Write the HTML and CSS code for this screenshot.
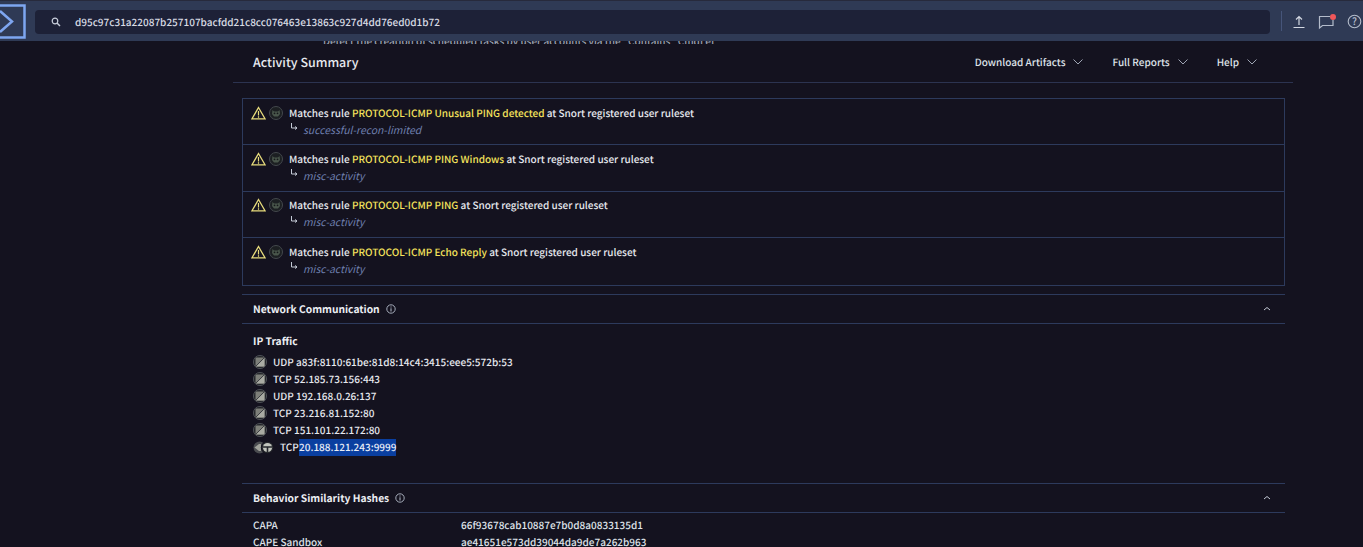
FILE: index.html
```html
<!DOCTYPE html>
<html lang="en">
<head>
<meta charset="utf-8">
<title>Activity Summary</title>
<link rel="stylesheet" href="styles.css">
</head>
<body>
<header class="topbar">
  <div class="logo"><svg width="26" height="35" viewBox="0 0 26 35"><path d="M0 1.500H24.500V33.500H0" fill="none" stroke="#7ea6f0" stroke-width="2.500"/><path d="M0 7L12 17.500L0 28" fill="none" stroke="#7ea6f0" stroke-width="2.500"/></svg></div>
  <div class="search">
    <svg class="search-icon" width="10" height="10" viewBox="0 0 10 10"><circle cx="4" cy="4" r="2.800" fill="none" stroke="#c9cfdc" stroke-width="1.200"/><path d="M6 6L9 9" stroke="#c9cfdc" stroke-width="1.400"/></svg>
    <span class="search-text">d95c97c31a22087b257107bacfdd21c8cc076463e13863c927d4dd76ed0d1b72</span>
  </div>
  <div class="top-sep"></div>
  <div class="top-icons">
    <svg width="14" height="16" viewBox="0 0 14 16"><path d="M7 11V3M4 5.500L7 2.500L10 5.500M1.500 13.500H12.500" fill="none" stroke="#d3d8e2" stroke-width="1.200"/></svg>
    <span class="chat"><svg width="17" height="16" viewBox="0 0 17 16"><path d="M12 2.500H1.500V14L4.500 11.500H15V6" fill="none" stroke="#b4bccb" stroke-width="1.200"/></svg><i class="dot"></i></span>
    <svg width="15" height="15" viewBox="0 0 15 15"><circle cx="7.500" cy="7.500" r="6.300" fill="none" stroke="#b4bccb" stroke-width="1.100"/><text x="7.500" y="10.800" class="qmark">?</text></svg>
  </div>
</header>

<main class="report">
  <nav class="summary-head">
    <div class="clipped">Detect the creation of scheduled tasks by user accounts via the "Contains" CmdLet</div>
    <h1>Activity Summary</h1>
    <div class="menus">
      <span class="menu">Download Artifacts<svg class="chev" width="10" height="6" viewBox="0 0 10 6"><path d="M.5 .5L5 5L9.500 .5"/></svg></span>
      <span class="menu">Full Reports<svg class="chev" width="10" height="6" viewBox="0 0 10 6"><path d="M.5 .5L5 5L9.500 .5"/></svg></span>
      <span class="menu">Help<svg class="chev" width="10" height="6" viewBox="0 0 10 6"><path d="M.5 .5L5 5L9.500 .5"/></svg></span>
    </div>
  </nav>

  <div class="alerts">
    <div class="alert">
      <div class="alert-line">
        <svg class="warn" width="15" height="14" viewBox="0 0 15 14"><path d="M7.500 1.500L14 12.800H1Z" fill="none" stroke="#e8dc7c" stroke-width="1.300"/><path d="M7.500 5V9.500M7.500 10.300V11.800" stroke="#e8dc7c" stroke-width="1.200"/></svg>
        <svg class="bug" width="14" height="14" viewBox="0 0 14 14"><circle cx="7" cy="7" r="6.500" fill="#1c1f22" stroke="#44484d"/><path d="M3.500 4L5 5.500H9L10.500 4L11 8L9 10.500H5L3 8Z" fill="#49564b"/><circle cx="5.500" cy="7.300" r=".9" fill="#15171a"/><circle cx="8.500" cy="7.300" r=".9" fill="#15171a"/></svg>
        <span>Matches rule <b class="rule">PROTOCOL-ICMP Unusual PING detected</b> at Snort registered user ruleset</span>
      </div>
      <div class="alert-sub"><svg class="arrow" width="8" height="8" viewBox="0 0 8 8"><path d="M1.500 0V5H7M5 3.500L7 5L5 6.500" fill="none" stroke="#c4cad6"/></svg><em>successful-recon-limited</em></div>
    </div>
    <div class="alert">
      <div class="alert-line">
        <svg class="warn" width="15" height="14" viewBox="0 0 15 14"><path d="M7.500 1.500L14 12.800H1Z" fill="none" stroke="#e8dc7c" stroke-width="1.300"/><path d="M7.500 5V9.500M7.500 10.300V11.800" stroke="#e8dc7c" stroke-width="1.200"/></svg>
        <svg class="bug" width="14" height="14" viewBox="0 0 14 14"><circle cx="7" cy="7" r="6.500" fill="#1c1f22" stroke="#44484d"/><path d="M3.500 4L5 5.500H9L10.500 4L11 8L9 10.500H5L3 8Z" fill="#49564b"/><circle cx="5.500" cy="7.300" r=".9" fill="#15171a"/><circle cx="8.500" cy="7.300" r=".9" fill="#15171a"/></svg>
        <span>Matches rule <b class="rule">PROTOCOL-ICMP PING Windows</b> at Snort registered user ruleset</span>
      </div>
      <div class="alert-sub"><svg class="arrow" width="8" height="8" viewBox="0 0 8 8"><path d="M1.500 0V5H7M5 3.500L7 5L5 6.500" fill="none" stroke="#c4cad6"/></svg><em>misc-activity</em></div>
    </div>
    <div class="alert">
      <div class="alert-line">
        <svg class="warn" width="15" height="14" viewBox="0 0 15 14"><path d="M7.500 1.500L14 12.800H1Z" fill="none" stroke="#e8dc7c" stroke-width="1.300"/><path d="M7.500 5V9.500M7.500 10.300V11.800" stroke="#e8dc7c" stroke-width="1.200"/></svg>
        <svg class="bug" width="14" height="14" viewBox="0 0 14 14"><circle cx="7" cy="7" r="6.500" fill="#1c1f22" stroke="#44484d"/><path d="M3.500 4L5 5.500H9L10.500 4L11 8L9 10.500H5L3 8Z" fill="#49564b"/><circle cx="5.500" cy="7.300" r=".9" fill="#15171a"/><circle cx="8.500" cy="7.300" r=".9" fill="#15171a"/></svg>
        <span>Matches rule <b class="rule">PROTOCOL-ICMP PING</b> at Snort registered user ruleset</span>
      </div>
      <div class="alert-sub"><svg class="arrow" width="8" height="8" viewBox="0 0 8 8"><path d="M1.500 0V5H7M5 3.500L7 5L5 6.500" fill="none" stroke="#c4cad6"/></svg><em>misc-activity</em></div>
    </div>
    <div class="alert">
      <div class="alert-line">
        <svg class="warn" width="15" height="14" viewBox="0 0 15 14"><path d="M7.500 1.500L14 12.800H1Z" fill="none" stroke="#e8dc7c" stroke-width="1.300"/><path d="M7.500 5V9.500M7.500 10.300V11.800" stroke="#e8dc7c" stroke-width="1.200"/></svg>
        <svg class="bug" width="14" height="14" viewBox="0 0 14 14"><circle cx="7" cy="7" r="6.500" fill="#1c1f22" stroke="#44484d"/><path d="M3.500 4L5 5.500H9L10.500 4L11 8L9 10.500H5L3 8Z" fill="#49564b"/><circle cx="5.500" cy="7.300" r=".9" fill="#15171a"/><circle cx="8.500" cy="7.300" r=".9" fill="#15171a"/></svg>
        <span>Matches rule <b class="rule">PROTOCOL-ICMP Echo Reply</b> at Snort registered user ruleset</span>
      </div>
      <div class="alert-sub"><svg class="arrow" width="8" height="8" viewBox="0 0 8 8"><path d="M1.500 0V5H7M5 3.500L7 5L5 6.500" fill="none" stroke="#c4cad6"/></svg><em>misc-activity</em></div>
    </div>
  </div>

  <section class="panel network">
    <div class="panel-head">
      <h2>Network Communication</h2>
      <svg class="info" width="10" height="10" viewBox="0 0 10 10"><circle cx="5" cy="5" r="4.200" fill="none" stroke="#b4bccb" stroke-width=".9"/><path d="M5 4.300V7.500M5 2.500V3.500" stroke="#b4bccb"/></svg>
      <svg class="collapse" width="8" height="5" viewBox="0 0 8 5"><path d="M1 4L4 1.500L7 4" fill="none" stroke="#c4cad6"/></svg>
    </div>
    <div class="panel-body">
      <h3>IP Traffic</h3>
      <ul class="traffic">
        <li><svg class="flag" width="14" height="14" viewBox="0 0 14 14"><circle cx="7" cy="7" r="6.600" fill="#24262b" stroke="#4a4d53"/><rect x="2.500" y="2.500" width="9" height="9" rx="1" fill="#7d7f79"/><path d="M11.500 3V11.500H3Z" fill="#a9aba3"/><path d="M2.500 11.500L11.500 2.500" stroke="#3c3e42"/></svg>UDP a83f:8110:61be:81d8:14c4:3415:eee5:572b:53</li>
        <li><svg class="flag" width="14" height="14" viewBox="0 0 14 14"><circle cx="7" cy="7" r="6.600" fill="#24262b" stroke="#4a4d53"/><rect x="2.500" y="2.500" width="9" height="9" rx="1" fill="#7d7f79"/><path d="M11.500 3V11.500H3Z" fill="#a9aba3"/><path d="M2.500 11.500L11.500 2.500" stroke="#3c3e42"/></svg>TCP 52.185.73.156:443</li>
        <li><svg class="flag" width="14" height="14" viewBox="0 0 14 14"><circle cx="7" cy="7" r="6.600" fill="#24262b" stroke="#4a4d53"/><rect x="2.500" y="2.500" width="9" height="9" rx="1" fill="#7d7f79"/><path d="M11.500 3V11.500H3Z" fill="#a9aba3"/><path d="M2.500 11.500L11.500 2.500" stroke="#3c3e42"/></svg>UDP 192.168.0.26:137</li>
        <li><svg class="flag" width="14" height="14" viewBox="0 0 14 14"><circle cx="7" cy="7" r="6.600" fill="#24262b" stroke="#4a4d53"/><rect x="2.500" y="2.500" width="9" height="9" rx="1" fill="#7d7f79"/><path d="M11.500 3V11.500H3Z" fill="#a9aba3"/><path d="M2.500 11.500L11.500 2.500" stroke="#3c3e42"/></svg>TCP 23.216.81.152:80</li>
        <li><svg class="flag" width="14" height="14" viewBox="0 0 14 14"><circle cx="7" cy="7" r="6.600" fill="#24262b" stroke="#4a4d53"/><rect x="2.500" y="2.500" width="9" height="9" rx="1" fill="#7d7f79"/><path d="M11.500 3V11.500H3Z" fill="#a9aba3"/><path d="M2.500 11.500L11.500 2.500" stroke="#3c3e42"/></svg>TCP 151.101.22.172:80</li>
        <li class="double"><svg class="flag2" width="21" height="13" viewBox="0 0 21 13"><circle cx="6.500" cy="6.500" r="6" fill="#4a4c50"/><path d="M1.500 6.500L6 3H8V10H6Z" fill="#a0a29b"/><circle cx="14.500" cy="6.500" r="6.200" fill="#26282d" stroke="#14121f"/><circle cx="14.500" cy="6.500" r="4.600" fill="#c3c5be"/><path d="M10 6H19M14.500 6.500V11.500" stroke="#26282d" stroke-width="1.600"/></svg>TCP <mark class="selected">20.188.121.243:9999</mark></li>
      </ul>
    </div>
  </section>

  <section class="panel hashes">
    <div class="panel-head">
      <h2>Behavior Similarity Hashes</h2>
      <svg class="info" width="10" height="10" viewBox="0 0 10 10"><circle cx="5" cy="5" r="4.200" fill="none" stroke="#b4bccb" stroke-width=".9"/><path d="M5 4.300V7.500M5 2.500V3.500" stroke="#b4bccb"/></svg>
      <svg class="collapse" width="8" height="5" viewBox="0 0 8 5"><path d="M1 4L4 1.500L7 4" fill="none" stroke="#c4cad6"/></svg>
    </div>
    <dl class="hash-list">
      <dt>CAPA</dt><dd>66f93678cab10887e7b0d8a0833135d1</dd>
      <dt>CAPE Sandbox</dt><dd>ae41651e573dd39044da9de7a262b963</dd>
    </dl>
  </section>
</main>
</body>
</html>
```
FILE: styles.css
```css
* { box-sizing: border-box; }
html, body { margin: 0; height: 547px; overflow: hidden; }
body {
  background: #14121f;
  color: #e6e8ee;
  font-family: "Noto Sans CJK JP", "Noto Sans", sans-serif;
  font-size: 10px;
  font-weight: 500;
  line-height: 14px;
  text-rendering: geometricPrecision;
}
.topbar {
  display: flex;
  align-items: center;
  height: 41px;
  background: #2f3a55;
  border-top: 1px solid #272a3c;
  position: relative;
  z-index: 2;
}
.logo { width: 35px; height: 35px; flex: none; display: flex; }
.search {
  flex: none;
  width: 1235px;
  height: 24px;
  background: #1d2137;
  border-radius: 4px;
  display: flex;
  align-items: center;
  padding-left: 16px;
  margin-top: 1px;
}
.search-icon { margin-right: 14px; }
.search-text { color: #d8dbe4; }
.top-sep { width: 1px; height: 20px; background: #46557a; margin: 0 10px 0 11px; flex: none; }
.top-icons { display: flex; align-items: center; gap: 12px; flex: none; margin-top: 1px; }
.chat { position: relative; display: flex; }
.dot {
  position: absolute;
  top: 0;
  right: -1px;
  width: 6px;
  height: 6px;
  border-radius: 50%;
  background: #f0575a;
}
.qmark { font-size: 10px; text-anchor: middle; fill: #b4bccb; }

.report { margin-left: 233px; width: 1060px; }
.clipped {
  position: absolute;
  left: 90px;
  top: 0;
  height: 3px;
  line-height: 0;
  overflow: hidden;
  color: #9da3b1;
  white-space: nowrap;
}
.summary-head {
  display: flex;
  align-items: center;
  justify-content: space-between;
  height: 42px;
  padding: 0 36px 0 20px;
  border-bottom: 1px solid #2c3350;
  background: #14121f;
  position: relative;
}
.summary-head h1 { margin: 0; font-size: 12.450px; font-weight: 500; color: #e8eaf0; }
.menus { display: flex; gap: 29px; }
.menu { display: flex; align-items: center; gap: 8px; color: #dfe2e9; }
.chev { fill: none; stroke: #aeb5c4; stroke-width: .9; }

.alerts {
  margin: 15px 8px 0 9px;
  border: 1px solid #2d3a5c;
}
.alert { height: 46.400px; padding: 6px 8px 0; border-bottom: 1px solid #2d3a5c; }
.alert:last-child { border-bottom: 0; }
.alert-line { display: flex; align-items: center; height: 15px; }
.warn { margin-right: 3px; flex: none; }
.bug { margin-right: 6px; flex: none; }
.rule { font-weight: 500; color: #f4e35c; }
.alert-sub {
  display: flex;
  align-items: center;
  margin-top: 2px;
  padding-left: 39px;
  height: 15px;
}
.arrow { margin-right: 5px; margin-top: -5px; }
.alert-sub em { color: #6e7fae; font-style: italic; font-weight: 400; font-size: 10.400px; }

.panel { margin: 0 8px 0 9px; }
.panel-head {
  display: flex;
  align-items: center;
  height: 30px;
  padding: 0 14px 0 11px;
  border-top: 1px solid #2d3a5c;
  border-bottom: 1px solid #2d3a5c;
}
.panel-head h2 { margin: 0; font-size: 10.250px; font-weight: 700; color: #eceef3; }
.info { margin-left: 6px; }
.collapse { margin-left: auto; }
.network { margin-top: 8px; height: 189px; }
.panel-body { padding: 9px 11px 0; }
.panel-body h3 { margin: 0 0 5px; font-size: 10.250px; font-weight: 700; line-height: 16px; color: #eceef3; }
.traffic { list-style: none; margin: 0; padding: 0; }
.traffic li { display: flex; align-items: center; height: 17px; white-space: pre; color: #e6e8ee; }
.flag { margin-right: 6px; flex: none; }
.flag2 { margin-right: 6px; flex: none; }
.selected { background: #0a3fa0; color: #e8ecf6; padding: 1px 0 2px; margin-left: -2px; }

.hash-list {
  display: grid;
  grid-template-columns: 208px 1fr;
  row-gap: 3px;
  margin: 5px 0 0;
  padding-left: 11px;
}
.hash-list dt { color: #dfe2e9; }
.hash-list dd { margin: 0; color: #dfe2e9; }
```
